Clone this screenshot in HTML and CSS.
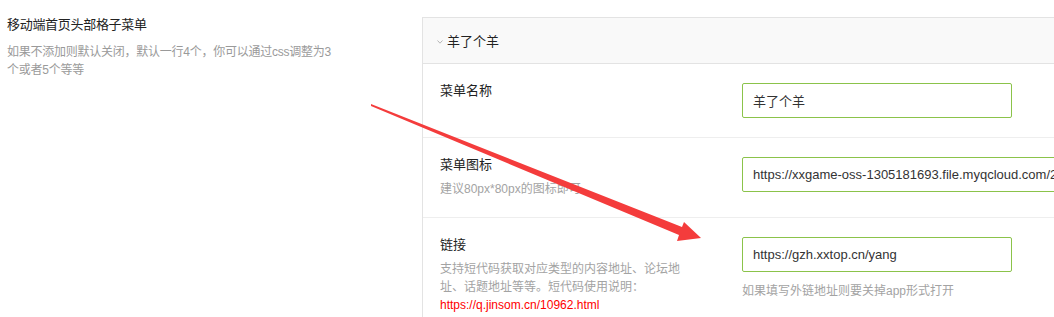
FILE: index.html
```html
<!DOCTYPE html>
<html lang="zh-CN">
<head>
	<meta charset="utf-8">
	<title>移动端首页头部格子菜单</title>
	<link rel="stylesheet" href="styles.css">
</head>
<body>

	<div class="setting">
		<div class="setting-info">
			<div class="setting-title">移动端首页头部格子菜单</div>
			<div class="setting-desc">如果不添加则默认关闭，默认一行4个，你可以通过css调整为3个或者5个等等</div>
		</div>

		<div class="group">
			<div class="group-head">
				<svg class="chevron" width="6" height="4" viewBox="0 0 6 4"><path d="M0.5 0.5 L3 3.2 L5.5 0.5" fill="none" stroke="#b5b5b5" stroke-width="1"/></svg>
				<span>羊了个羊</span>
			</div>

			<div class="field">
				<div class="field-label">
					<div class="field-name">菜单名称</div>
				</div>
				<div class="field-input">
					<input type="text" class="text" value="羊了个羊">
				</div>
			</div>

			<div class="field">
				<div class="field-label">
					<div class="field-name">菜单图标</div>
					<div class="field-desc">建议80px*80px的图标即可</div>
				</div>
				<div class="field-input">
					<input type="text" class="text wide" value="https://xxgame-oss-1305181693.file.myqcloud.com/2022/09/logo.png">
				</div>
			</div>

			<div class="field">
				<div class="field-label">
					<div class="field-name">链接</div>
					<div class="field-desc">支持短代码获取对应类型的内容地址、论坛地址、话题地址等等。短代码使用说明：<a href="#">https://q.jinsom.cn/10962.html</a></div>
				</div>
				<div class="field-input">
					<input type="text" class="text" value="https://gzh.xxtop.cn/yang">
					<div class="field-help">如果填写外链地址则要关掉app形式打开</div>
				</div>
			</div>
		</div>
	</div>

	<!-- annotation arrow drawn over the page -->
	<svg class="arrow" width="1054" height="317" viewBox="0 0 1054 317">
		<polygon points="371,104 682,227 684,222 701,238 677,241 679,235 371,106" fill="#f43c3c"/>
	</svg>

</body>
</html>
```

FILE: styles.css
```css
body {
	margin: 0;
	overflow: hidden;
	font-family: "Liberation Sans", "Noto Sans CJK SC", sans-serif;
	color: #333;
	background-color: #fff;
}
.setting {
	display: flex;
	align-items: flex-start;
	padding: 16px 0 0 7px;
}
.setting-info {
	width: 330px;
	flex-shrink: 0;
	margin-right: 85px;
}
.setting-title {
	font-size: 13px;
	line-height: 18px;
	letter-spacing: -0.3px;
	color: #222;
}
.setting-desc {
	margin-top: 9px;
	font-size: 12px;
	line-height: 18px;
	letter-spacing: -0.25px;
	color: #9a9a9a;
}

.group {
	margin-top: 1px;
	width: 660px;
	flex-shrink: 0;
	border: 1px solid #e3e3e3;
	border-right: 0;
}
.group-head {
	display: flex;
	align-items: center;
	height: 45px;
	padding-left: 14px;
	background-color: #f9f9f9;
	border-bottom: 1px solid #e3e3e3;
	font-size: 13px;
	color: #222;
}
.chevron {
	margin: 2px 4px 0 0;
}

.field {
	display: grid;
	grid-template-columns: 245px 1fr;
	column-gap: 57px;
	padding: 19px 0 19px 17px;
	border-bottom: 1px solid #eee;
}
.field:last-child {
	border-bottom: 0;
}
.field-name {
	font-size: 13px;
	line-height: 16px;
	color: #222;
}
.field-desc {
	margin-top: 7px;
	font-size: 12px;
	line-height: 18px;
	color: #a3a3a3;
}
.field-desc a {
	color: #f00;
	text-decoration: none;
}
.text {
	display: block;
	box-sizing: border-box;
	width: 270px;
	height: 35px;
	padding: 0 10px;
	border: 1px solid #8bc34a;
	border-radius: 2px;
	font-family: "Liberation Sans", "Noto Sans CJK SC", sans-serif;
	font-size: 13px;
	color: #333;
	outline: none;
}
.text.wide {
	width: 420px;
}
.field-help {
	margin-top: 10px;
	font-size: 12px;
	line-height: 18px;
	color: #a3a3a3;
}

.arrow {
	position: absolute;
	top: 0;
	left: 0;
	pointer-events: none;
}
```
